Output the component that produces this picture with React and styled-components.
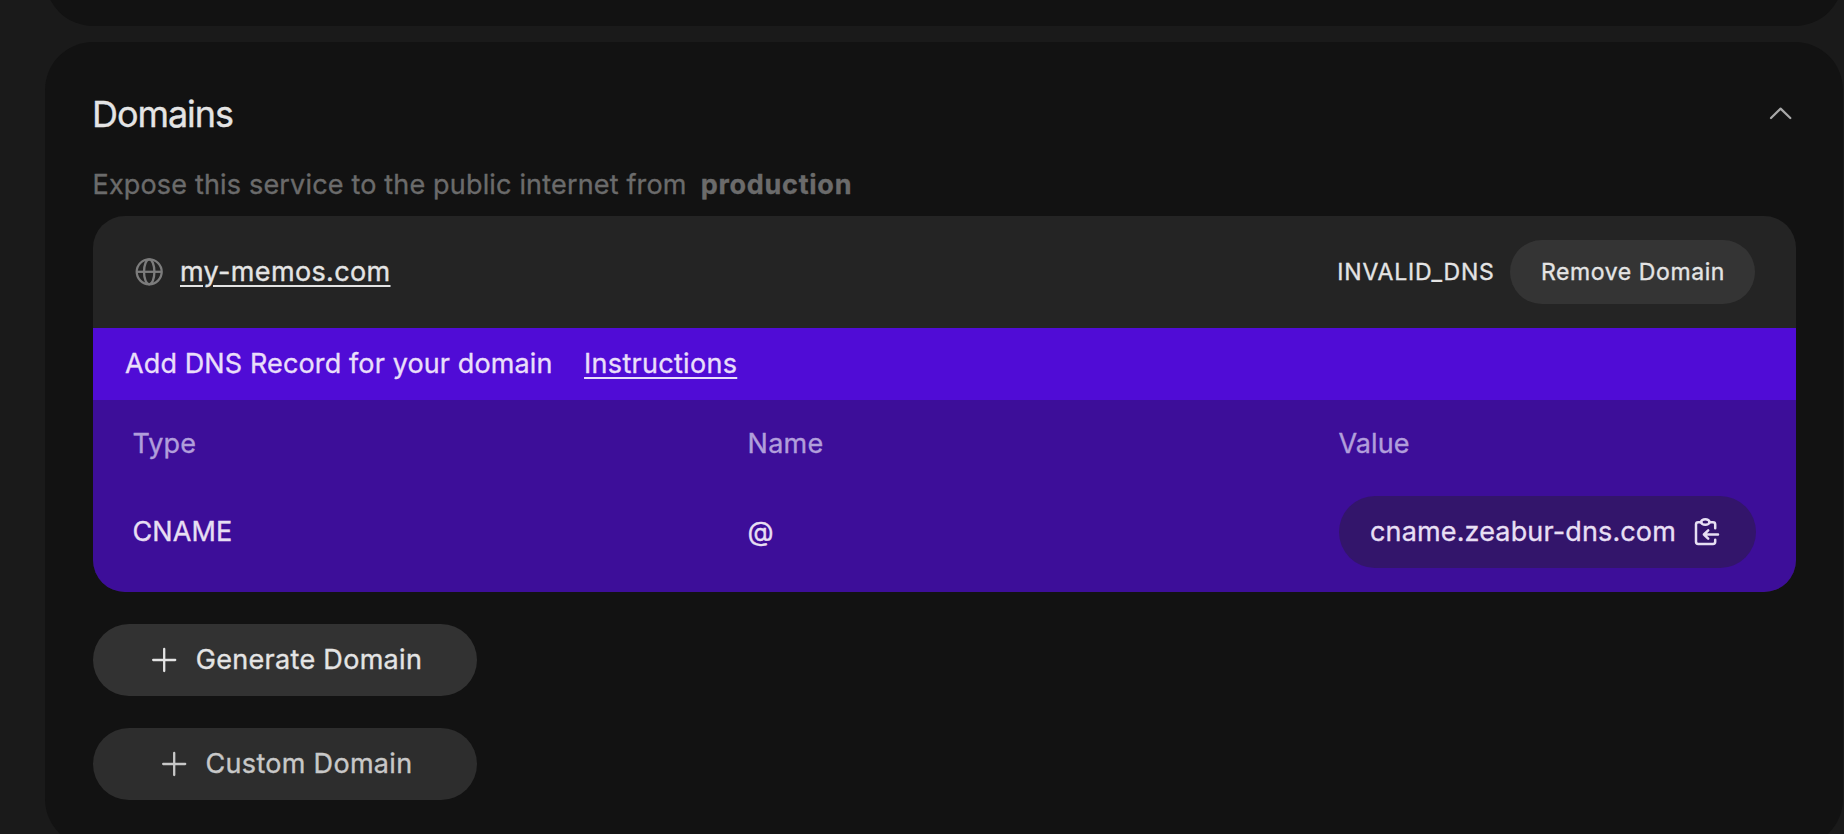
import React from "react";
import styled, { createGlobalStyle } from "styled-components";

const GlobalStyle = createGlobalStyle`
  * { box-sizing: border-box; }
  html, body { margin: 0; height: 100%; overflow: hidden; background: #1a1a1a; }
  body { font-family: Inter, "Liberation Sans", sans-serif; }
  svg { display: block; flex: none; }
  button { border: 0; font: inherit; cursor: pointer; }
`;

const Page = styled.main`
  display: flex;
  flex-direction: column;
  gap: 16px;
  height: 834px;
  overflow: hidden;
  padding: 0 1px 0 45px;
  background: #1a1a1a;
  color: #e4e4e4;
  font-size: 27px;
  line-height: 36px;
  white-space: nowrap;
  -webkit-text-stroke: 0.35px currentColor;
`;

const PreviousCard = styled.section`
  flex: none;
  height: 96px;
  margin-top: -70px;
  border-radius: 48px;
  background: #121212;
`;

const Card = styled.section`
  flex: none;
  height: 805px;
  padding: 48px 47px 0 48px;
  border-radius: 48px;
  background: #121212;
`;

const CardHeader = styled.header`
  display: flex;
  align-items: center;
  justify-content: space-between;
  height: 48px;
`;

const Title = styled.h2`
  margin: 0 0 0 -1px;
  font-size: 36px;
  font-weight: 400;
  line-height: 48px;
  letter-spacing: -1.05px;
`;

const Description = styled.p`
  margin: 29px 0 13px -0.5px;
  color: #6b6b6b;
  letter-spacing: 0.17px;
`;

const Environment = styled.strong`
  margin-left: 14px;
  font-weight: 700;
  letter-spacing: 0.73px;
`;

const DomainBox = styled.div`
  border-radius: 32px;
  overflow: hidden;
  background: #242424;
`;

const DomainRow = styled.div`
  display: flex;
  align-items: center;
  height: 112px;
  padding: 0 41px 0 41.5px;
`;

const Link = styled.a`
  color: inherit;
  letter-spacing: ${(p) => p.$spacing}px;
  text-decoration: underline;
  text-decoration-thickness: 2px;
  text-underline-offset: 4px;
`;

const DomainLink = styled(Link)`
  margin-left: 17.5px;
`;

const Status = styled.span`
  margin: 0 15.4px 0 auto;
  font-size: 23px;
  letter-spacing: 0.8px;
`;

const RemoveButton = styled.button`
  width: 245px;
  height: 64px;
  padding: 0 0 0 1px;
  border-radius: 32px;
  background: #343434;
  color: inherit;
  font-size: 23px;
  letter-spacing: 0.6px;
`;

const Banner = styled.div`
  display: flex;
  align-items: center;
  gap: 31.5px;
  height: 72px;
  padding-left: 32px;
  background: #500cd6;
  color: #e9defa;
  letter-spacing: 0.12px;
`;

const Records = styled.div`
  display: grid;
  grid-template-columns: 615px 591px 417px;
  grid-template-rows: 40px 72px;
  row-gap: 32px;
  align-items: center;
  height: 192px;
  padding: 24px 0 24px 39.5px;
  background: #3d0e99;
  color: #e7dff3;
`;

const Heading = styled.span`
  color: #b19edb;
  letter-spacing: ${(p) => p.$spacing}px;
`;

const Cell = styled.span`
  letter-spacing: 0.1px;
`;

const CopyPill = styled.button`
  display: flex;
  align-items: center;
  justify-content: space-between;
  height: 72px;
  padding: 0 31px 0 31.5px;
  border-radius: 36px;
  background: #33156b;
  color: inherit;
  letter-spacing: 0.14px;
`;

const Actions = styled.div`
  display: flex;
  flex-direction: column;
  gap: 32px;
  width: 384px;
  margin-top: 32px;
`;

const ActionButton = styled.button`
  display: flex;
  align-items: center;
  justify-content: center;
  gap: 16px;
  height: 72px;
  padding: 0;
  border-radius: 36px;
  background: ${(p) => (p.$muted ? "#2d2d2d" : "#323232")};
  color: ${(p) => (p.$muted ? "#c8c8c8" : "#e4e4e4")};
  letter-spacing: 0.3px;
`;

const ChevronUp = () => (
  <svg width="32" height="32" viewBox="0 0 32 32" fill="none" stroke="#a8a8a8" strokeWidth="2.2" strokeLinecap="round" strokeLinejoin="round">
    <path d="M7 20 16.6 10.6 26.3 20" />
  </svg>
);

const GlobeIcon = () => (
  <svg width="28" height="28" viewBox="0 0 28 28" fill="none" stroke="#7c7c7c" strokeWidth="2.3">
    <circle cx="14.2" cy="13.8" r="12.5" />
    <ellipse cx="14.2" cy="13.8" rx="5.2" ry="12.5" />
    <path d="M2 13.8H27" />
  </svg>
);

const ClipboardIcon = () => (
  <svg width="36" height="40" viewBox="0 0 36 40" fill="none" stroke="currentColor" strokeWidth="2.5" strokeLinecap="round" strokeLinejoin="round">
    <path d="M12.3 10.3H9.2Q7 10.3 7 12.5V29.8Q7 32 9.2 32H24Q26.2 32 26.2 29.8V27.8M20.3 10.3H24Q26.2 10.3 26.2 12.5V16.3" />
    <ellipse cx="16.3" cy="10" rx="4.2" ry="2.8" />
    <path d="M29 22.5H14.9M19.2 18.3 14.9 22.5 19.2 26.7" />
  </svg>
);

const PlusIcon = () => (
  <svg width="32" height="32" viewBox="0 0 32 32" fill="none" stroke="currentColor" strokeWidth="2.3" strokeLinecap="round">
    <path d="M5.2 16H27.2M16.2 5V27" />
  </svg>
);

export default function App() {
  return (
    <>
      <GlobalStyle />
      <Page>
        <PreviousCard />
        <Card>
          <CardHeader>
            <Title>Domains</Title>
            <ChevronUp />
          </CardHeader>
          <Description>
            Expose this service to the public internet from
            <Environment>production</Environment>
          </Description>
          <DomainBox>
            <DomainRow>
              <GlobeIcon />
              <DomainLink $spacing={0.35}>my-memos.com</DomainLink>
              <Status>INVALID_DNS</Status>
              <RemoveButton>Remove Domain</RemoveButton>
            </DomainRow>
            <Banner>
              <span>Add DNS Record for your domain</span>
              <Link $spacing={0.3}>Instructions</Link>
            </Banner>
            <Records>
              <Heading $spacing={0.1}>Type</Heading>
              <Heading $spacing={0.3}>Name</Heading>
              <Heading $spacing={0.07}>Value</Heading>
              <Cell>CNAME</Cell>
              <Cell>@</Cell>
              <CopyPill>
                cname.zeabur-dns.com
                <ClipboardIcon />
              </CopyPill>
            </Records>
          </DomainBox>
          <Actions>
            <ActionButton>
              <PlusIcon />
              Generate Domain
            </ActionButton>
            <ActionButton $muted>
              <PlusIcon />
              Custom Domain
            </ActionButton>
          </Actions>
        </Card>
      </Page>
    </>
  );
}
